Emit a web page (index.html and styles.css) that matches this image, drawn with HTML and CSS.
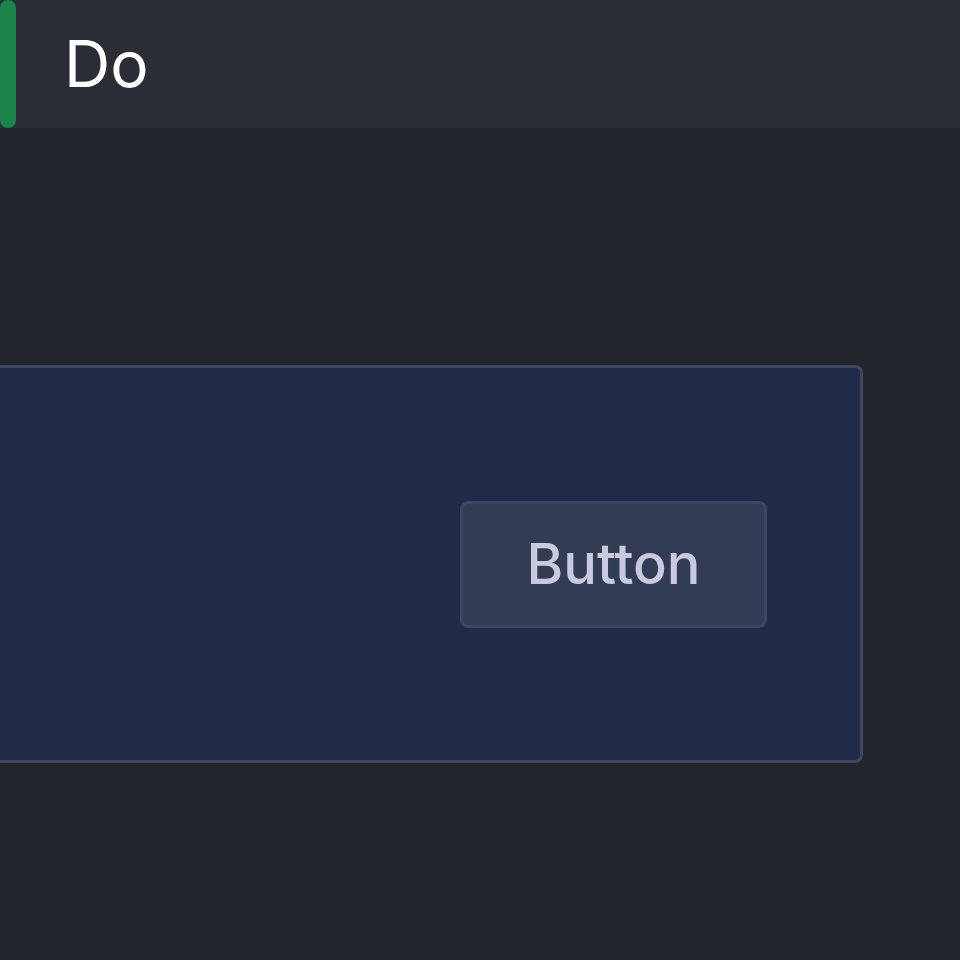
FILE: index.html
```html
<!DOCTYPE html>
<html>
<head>
<meta charset="utf-8">
<link rel="stylesheet" href="styles.css">
</head>
<body>
<header class="header">
  <div class="accent"></div>
  <h1 class="title">Do</h1>
</header>
<main class="main">
  <section class="card">
    <button class="btn">Button</button>
  </section>
</main>
</body>
</html>
```
FILE: styles.css
```css
html, body {
  margin: 0;
  padding: 0;
  background: #23252d;
  height: 100%;
  overflow: hidden;
}
body {
  font-family: Inter, "Noto Sans", sans-serif;
}
.header {
  height: 128px;
  background: #2a2d36;
  display: flex;
  align-items: center;
  gap: 48px;
}
.accent {
  width: 16px;
  height: 128px;
  align-self: flex-start;
  background: #1b844a;
  border-radius: 8px;
}
.title {
  margin: 0;
  font-size: 64px;
  font-weight: 400;
  color: #ffffff;
  line-height: 1;
}
.main {
  padding-top: 237px;
}
.card {
  box-sizing: border-box;
  margin-left: -40px;
  width: 903px;
  height: 398px;
  background: #1f2b47;
  border: 3px solid #3d475d;
  border-radius: 8px;
  display: flex;
  align-items: center;
  justify-content: flex-end;
  padding-right: 93px;
}
.btn {
  box-sizing: border-box;
  width: 307px;
  height: 127px;
  background: #323c54;
  border: 3px solid #3c4660;
  border-radius: 8px;
  color: #cacade;
  font-family: Inter, "Noto Sans", sans-serif;
  font-size: 56px;
  font-weight: 500;
  padding: 0;
  display: flex;
  align-items: center;
  justify-content: center;
}
```
